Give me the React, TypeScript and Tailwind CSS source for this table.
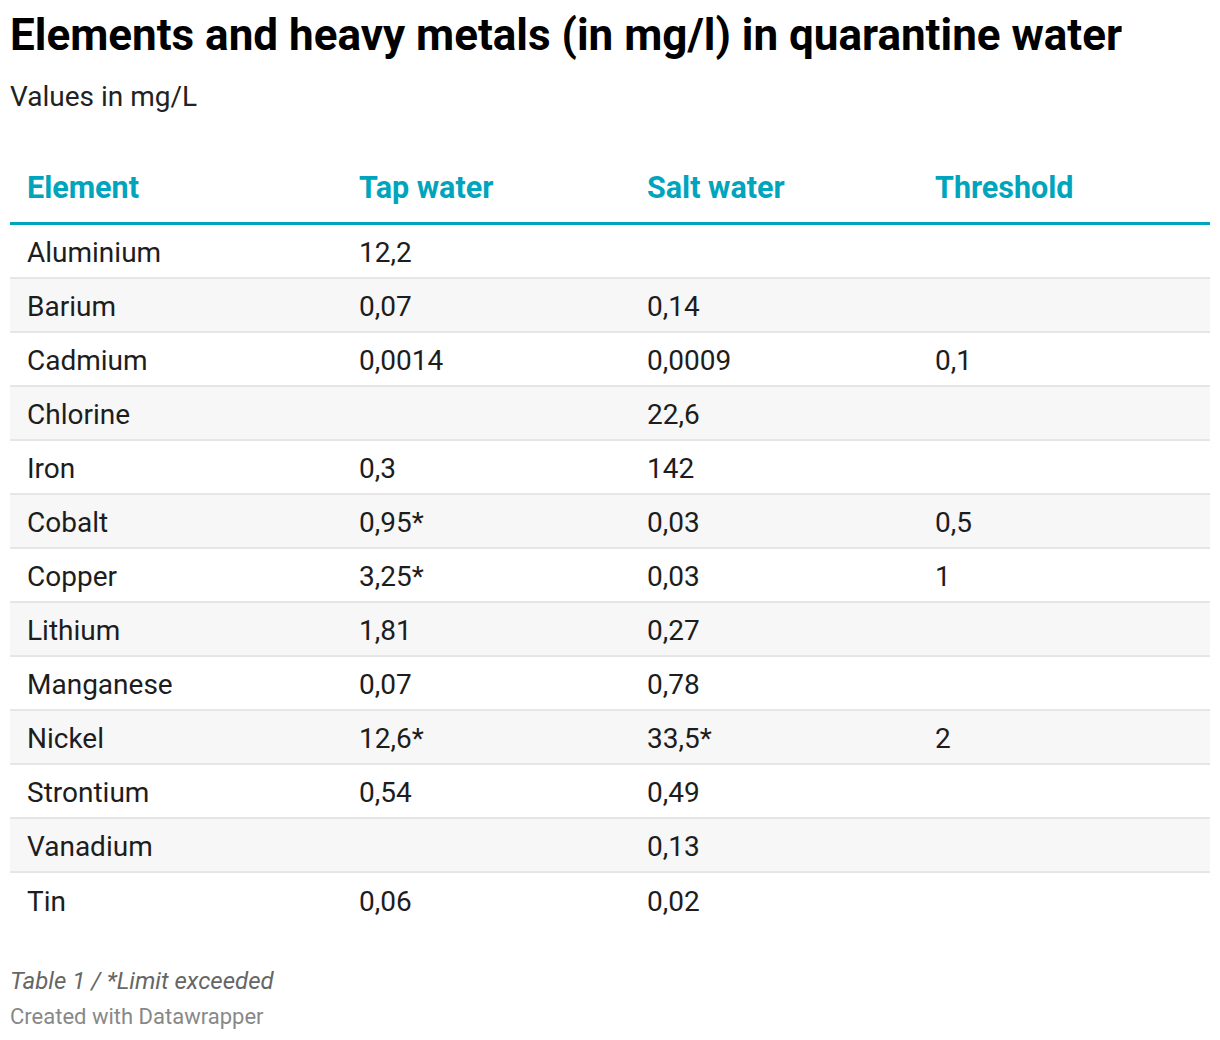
const rows: [string, string, string, string][] = [
  ["Aluminium", "12,2", "", ""],
  ["Barium", "0,07", "0,14", ""],
  ["Cadmium", "0,0014", "0,0009", "0,1"],
  ["Chlorine", "", "22,6", ""],
  ["Iron", "0,3", "142", ""],
  ["Cobalt", "0,95*", "0,03", "0,5"],
  ["Copper", "3,25*", "0,03", "1"],
  ["Lithium", "1,81", "0,27", ""],
  ["Manganese", "0,07", "0,78", ""],
  ["Nickel", "12,6*", "33,5*", "2"],
  ["Strontium", "0,54", "0,49", ""],
  ["Vanadium", "", "0,13", ""],
  ["Tin", "0,06", "0,02", ""],
];

const cols = "grid grid-cols-[332px_288px_288px_292px]";

export default function App() {
  return (
    <div className="bg-white min-h-screen px-[10px] pt-[10px] text-[#1d1d1d] font-['Roboto',sans-serif]">
      <h1 className="text-[44px] font-bold leading-[50px] text-black">
        Elements and heavy metals (in mg/l) in quarantine water
      </h1>
      <p className="text-[28px] leading-[34px] mt-[20px] text-[#222]">Values in mg/L</p>

      <div className="mt-[36px] w-[1200px]">
        <div className={`${cols} h-[75px] items-end pb-[16px] border-b-[3px] border-[#00a5bd] text-[#00a5bd] font-bold text-[30.5px]`}>
          {["Element", "Tap water", "Salt water", "Threshold"].map((h) => (
            <div key={h} className="pl-[17px] leading-[36px]">
              {h}
            </div>
          ))}
        </div>
        {rows.map((r, i) => (
          <div
            key={r[0]}
            className={`${cols} h-[54px] items-center pt-[3px] text-[28px] ${
              i % 2 === 1 ? "bg-[#f7f7f7]" : "bg-white"
            } ${i < rows.length - 1 ? "border-b-2 border-[#e6e6e6]" : ""}`}
          >
            {r.map((c, j) => (
              <div key={j} className="pl-[17px] leading-[34px]">
                {c}
              </div>
            ))}
          </div>
        ))}
      </div>

      <p className="mt-[39px] italic text-[24px] text-[#666] leading-[30px]">Table 1 / *Limit exceeded</p>
      <p className="mt-[8px] text-[22px] text-[#888] leading-[26px]">Created with Datawrapper</p>
    </div>
  );
}
